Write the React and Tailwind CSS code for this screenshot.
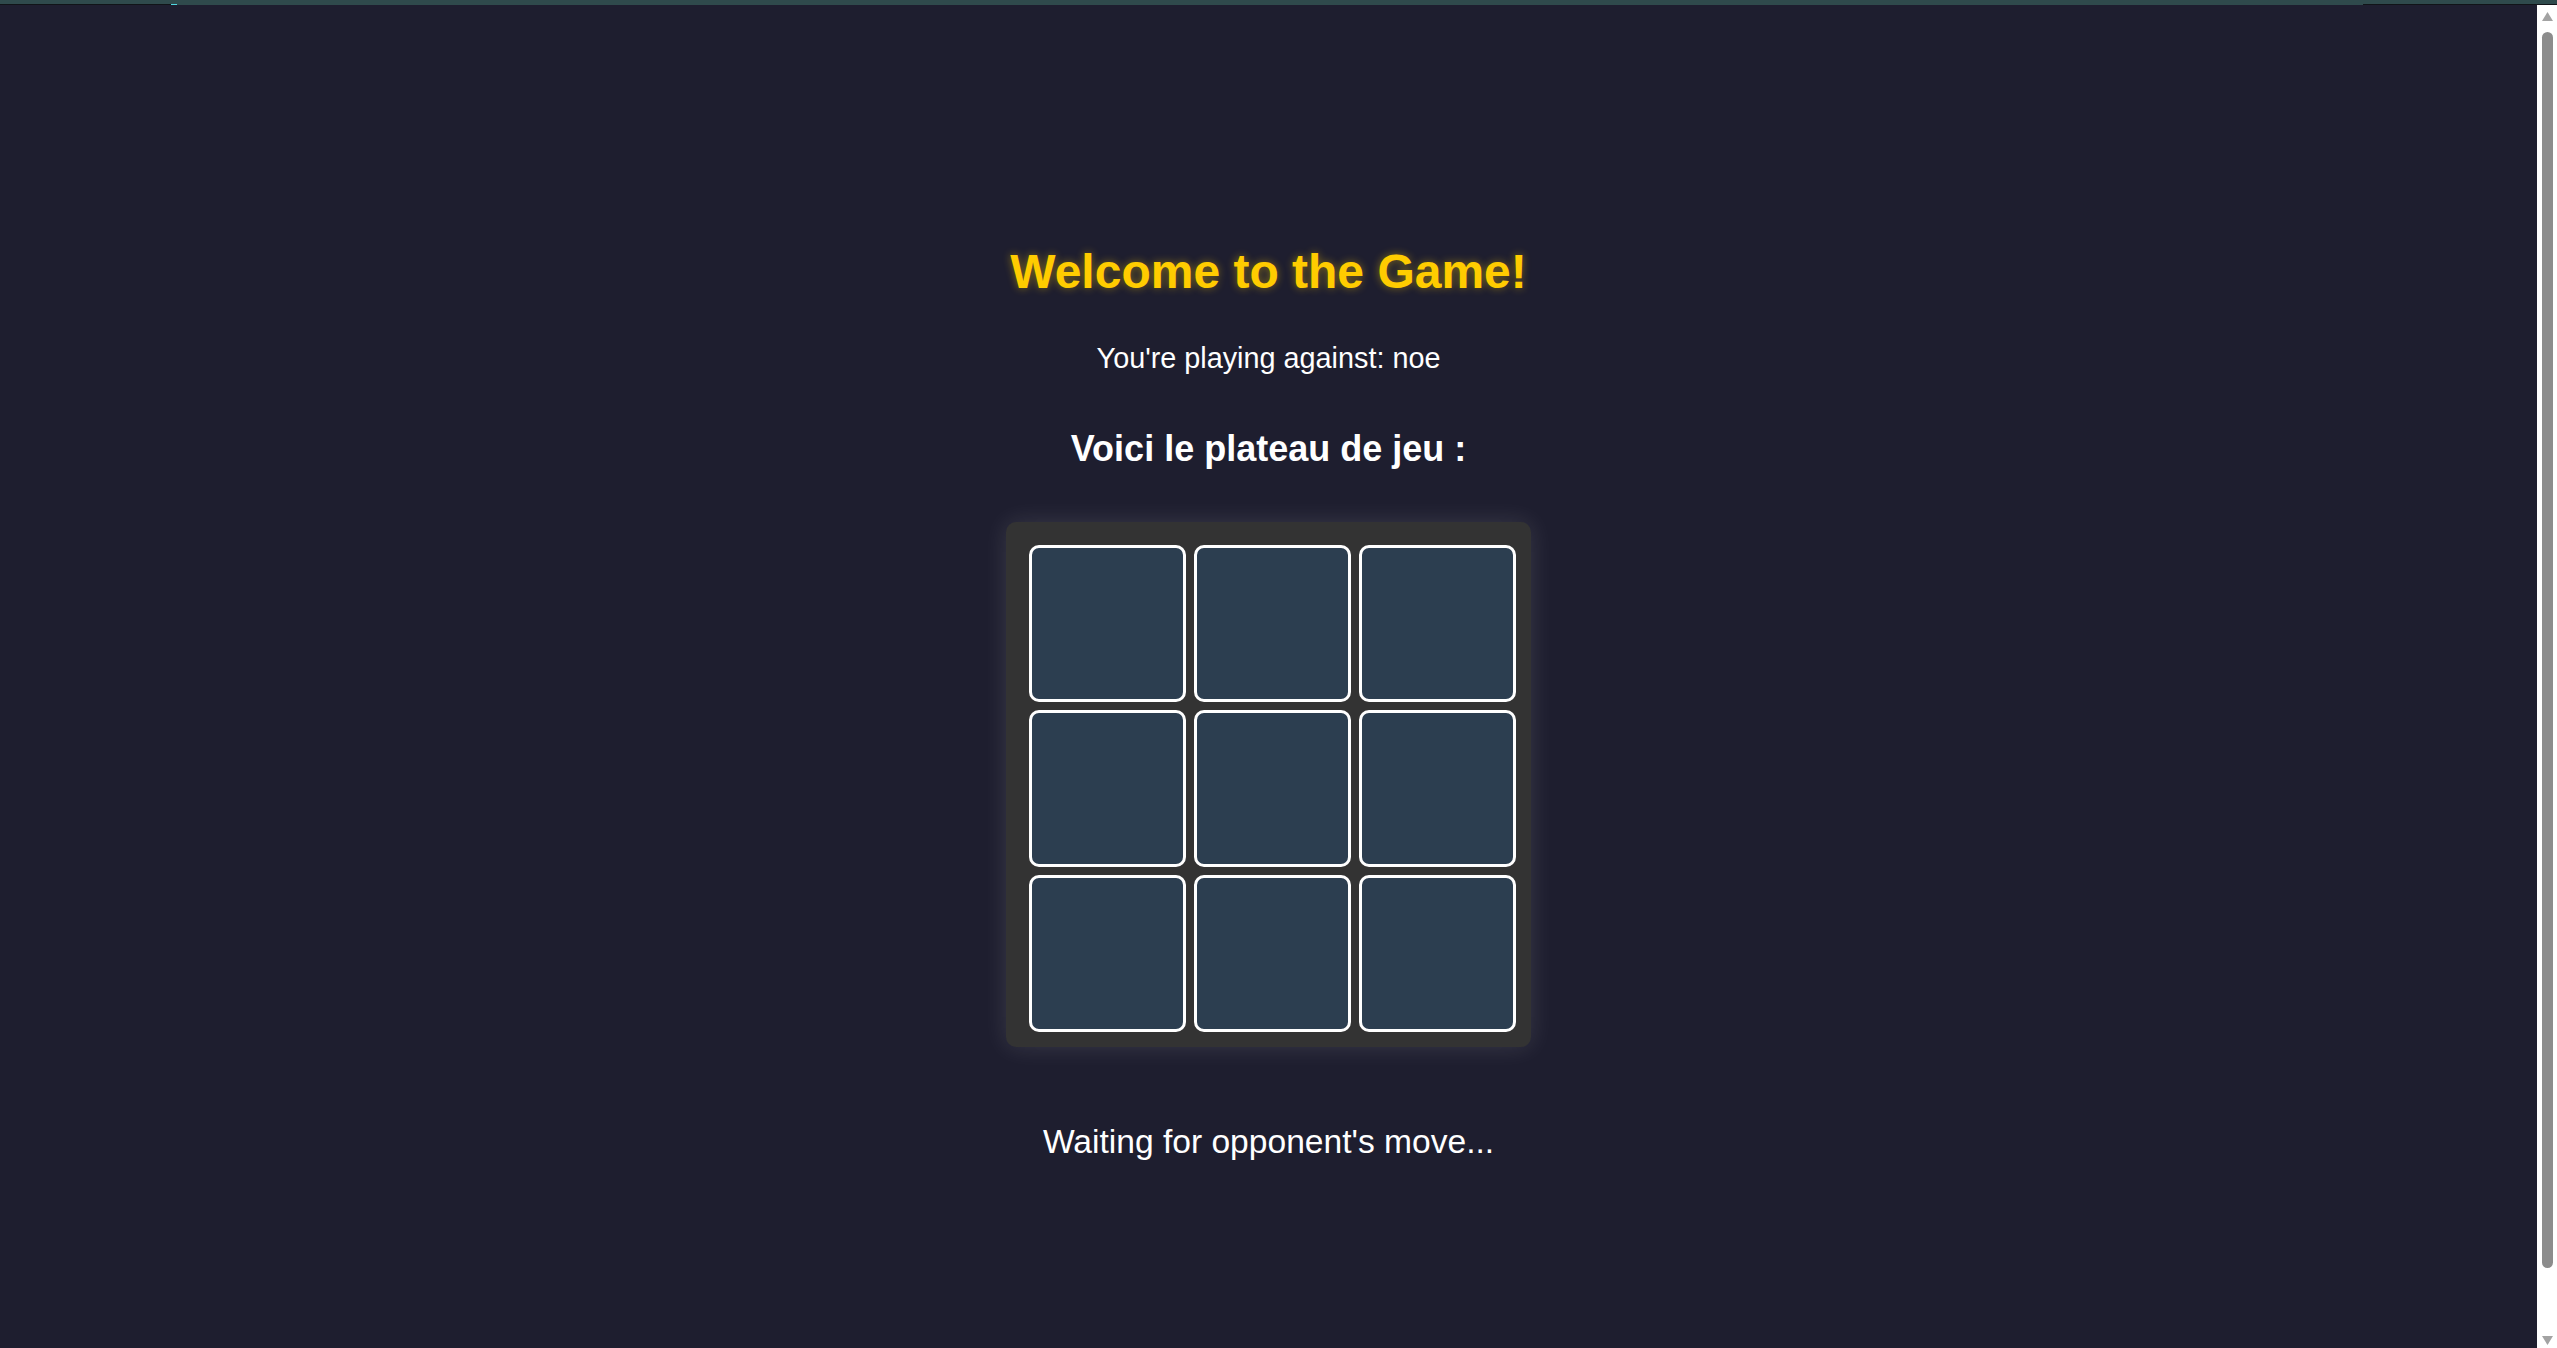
import React from 'react';

const cells = Array.from({ length: 9 }, (_, i) => i);

const Board = () => (
  <div className="mt-[55px] rounded-[10px] bg-[#333333] pl-[23px] pt-[23px] pr-[15px] pb-[15px] shadow-[0_0_24px_rgba(255,255,255,0.12)]">
    <div className="grid grid-cols-[repeat(3,157px)] grid-rows-[repeat(3,157px)] gap-[8px]">
      {cells.map((i) => (
        <div key={i} className="rounded-[10px] border-[3px] border-white bg-[#2c3e50]" />
      ))}
    </div>
  </div>
);

const Scrollbar = () => (
  <div className="flex w-[20px] flex-col items-center bg-white pl-[1px]">
    <svg width="11" height="9" viewBox="0 0 11 9" className="mt-[7px]">
      <polygon points="5.5,0 11,9 0,9" fill="#a3a3a3" />
    </svg>
    <div className="mt-[11px] h-[1236px] w-[11px] rounded-[6px] bg-[#8c8c8c]" />
    <div className="flex-1" />
    <svg width="11" height="9" viewBox="0 0 11 9" className="mb-[3px]">
      <polygon points="0,0 11,0 5.5,9" fill="#a3a3a3" />
    </svg>
  </div>
);

export default function App() {
  return (
    <div className="flex h-[1348px] w-full flex-col overflow-hidden font-['Liberation_Sans',Arial,sans-serif]">
      {/* bande du haut */}
      <div className="h-[4px] bg-[#2f4a4c]" />
      <div className="flex h-[1px]">
        <div className="w-[171px] bg-[#111418]" />
        <div className="w-[6px] bg-[#4fd6e0]" />
        <div className="flex-1 bg-[#2f4a4c]" />
        <div className="w-[194px] bg-[#111418]" />
      </div>

      <div className="flex min-h-0 flex-1">
        <main className="flex flex-1 flex-col items-center bg-[#1e1e2f] pt-[243px] text-white">
          <h1 className="text-[48px] font-bold leading-none text-[#ffcc00] [text-shadow:0_0_8px_rgba(255,204,0,0.45)]">
            Welcome to the Game!
          </h1>
          <p className="mt-[48px] text-[28.8px] leading-none">You're playing against: noe</p>
          <h2 className="mt-[58px] text-[36px] font-bold leading-none">Voici le plateau de jeu :</h2>

          <Board />

          <p className="mt-[78px] text-[33.6px] leading-none">Waiting for opponent's move...</p>
        </main>
        <Scrollbar />
      </div>
    </div>
  );
}
